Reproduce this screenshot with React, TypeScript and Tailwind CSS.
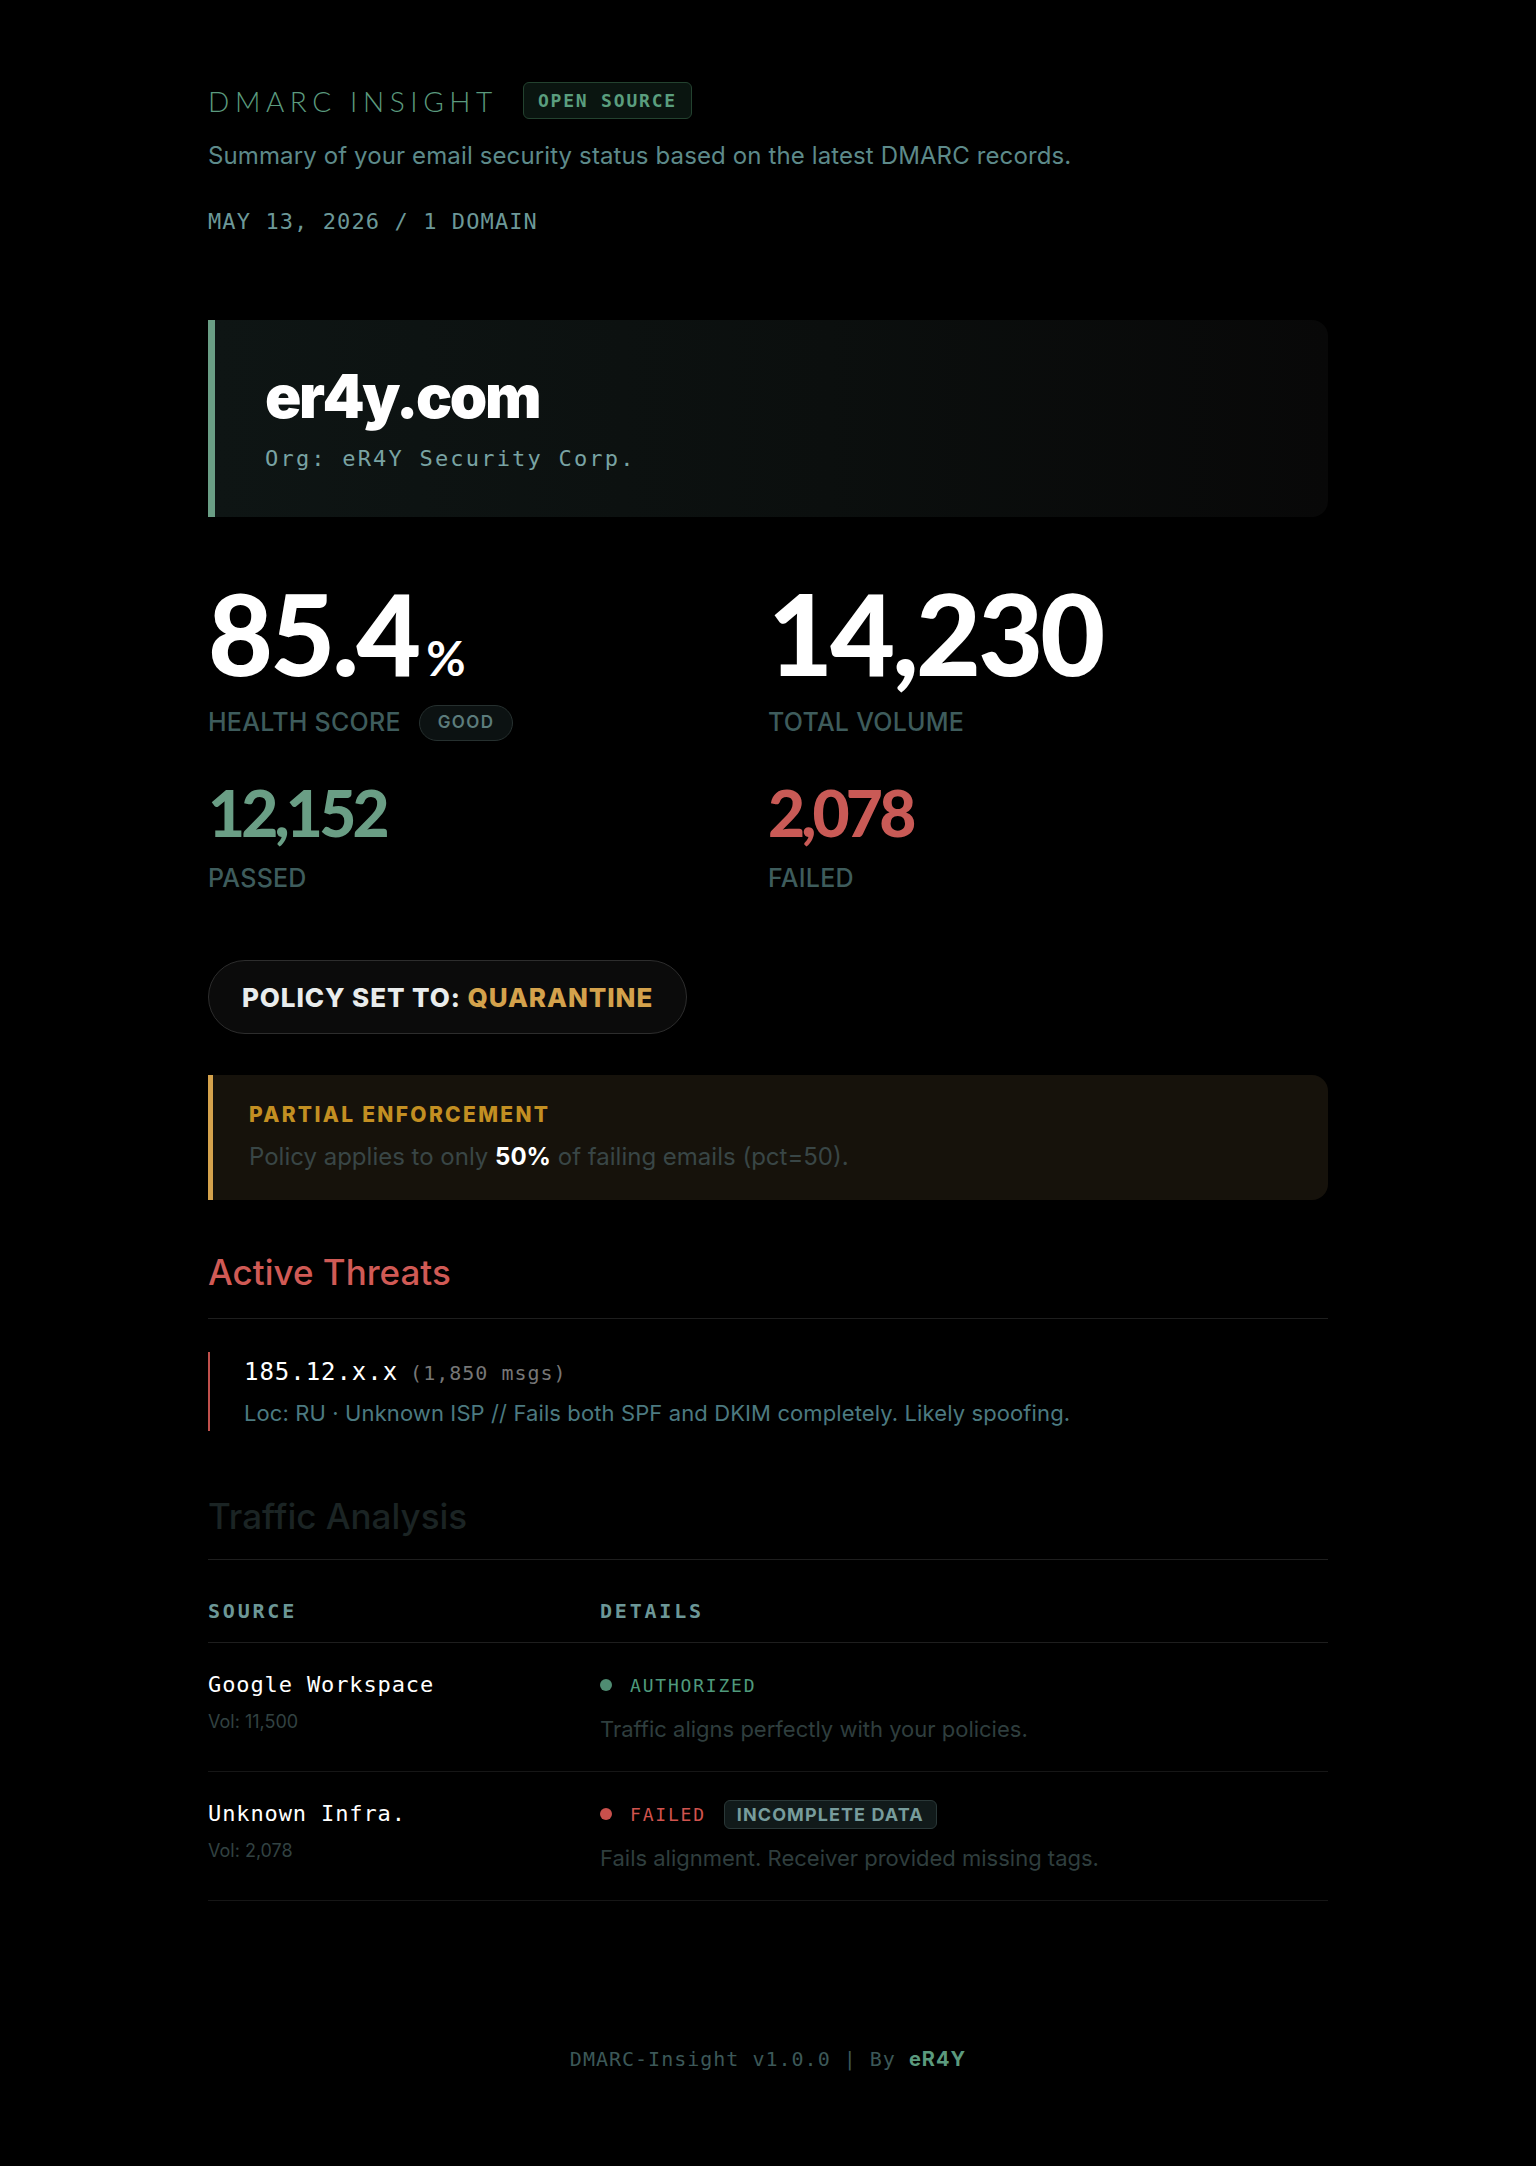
import type { ReactNode } from "react";

const mono = "font-['DejaVu_Sans_Mono',monospace]";
const lato = "font-['Lato',sans-serif]";

type Source = {
  name: string;
  volume: string;
  status: "ok" | "fail";
  statusLabel: string;
  tag?: string;
  detail: string;
};

const sources: Source[] = [
  {
    name: "Google Workspace",
    volume: "Vol: 11,500",
    status: "ok",
    statusLabel: "AUTHORIZED",
    detail: "Traffic aligns perfectly with your policies.",
  },
  {
    name: "Unknown Infra.",
    volume: "Vol: 2,078",
    status: "fail",
    statusLabel: "FAILED",
    tag: "INCOMPLETE DATA",
    detail: "Fails alignment. Receiver provided missing tags.",
  },
];

function Stat({
  value,
  label,
  big,
  color,
  children,
}: {
  value: ReactNode;
  label: string;
  big?: boolean;
  color: string;
  children?: ReactNode;
}) {
  return (
    <div>
      <div
        className={
          big
            ? `${lato} flex items-baseline text-[112px] leading-none font-black tracking-[-0.025em] ${color}`
            : `${lato} text-[64px] leading-none font-black tracking-[-0.06em] ${color}`
        }
      >
        {value}
      </div>
      <div className="mt-[15px] flex h-[38px] items-center gap-[18px]">
        <span className="text-[25px] font-medium tracking-[0.01em] text-[#3e5c5c]">{label}</span>
        {children}
      </div>
    </div>
  );
}

export default function App() {
  return (
    <div className="min-h-screen bg-black font-['Inter',sans-serif] text-white">
      <main className="mx-auto w-full max-w-[1120px] pt-[82px] pb-[92px]">
        {/* header */}
        <header>
          <div className="flex h-[37px] items-center gap-[25px]">
            <h1 className={`${lato} text-[28px] font-light tracking-[0.2em] text-[#5b9a7e]`}>DMARC INSIGHT</h1>
            <span
              className={`${mono} flex h-[37px] items-center rounded-md border border-[#23422f] bg-[#0a1510] px-[14px] text-[18px] font-bold tracking-[0.1em] text-[#5a9e7e]`}
            >
              OPEN SOURCE
            </span>
          </div>
          <p className="mt-[21px] text-[24px] leading-[32px] tracking-[0.005em] text-[#5d8a8a]">
            Summary of your email security status based on the latest DMARC records.
          </p>
          <p className={`${mono} mt-[36px] text-[22px] leading-[28px] tracking-[0.05em] text-[#6c9898]`}>
            MAY 13, 2026 / 1 DOMAIN
          </p>
        </header>

        {/* domain card */}
        <section className="mt-[84px] rounded-r-2xl border-l-[7px] border-[#6a9e85] bg-[linear-gradient(90deg,#0e1514_0%,#0b0f0e_55%,#080808_100%)] pt-[46px] pb-[44px] pl-[50px]">
          <h2 className="text-[60px] leading-none font-black tracking-[-0.04em] text-white">er4y.com</h2>
          <p className={`${mono} mt-[19px] text-[22px] leading-[28px] tracking-[0.1em] text-[#79a3a3]`}>
            Org: eR4Y Security Corp.
          </p>
        </section>

        {/* stats */}
        <section className="mt-[60px] grid grid-cols-2 gap-y-[39px]">
          <Stat
            big
            color="text-white"
            label="HEALTH SCORE"
            value={
              <>
                85.4<span className="ml-[8px] text-[48px] font-bold tracking-normal">%</span>
              </>
            }
          >
            <span className="flex h-[36px] items-center rounded-full border border-[#26302f] bg-[#0c1212] px-[18px] text-[17px] font-semibold tracking-[0.08em] text-[#5c7c7c]">
              GOOD
            </span>
          </Stat>
          <Stat big color="text-white" label="TOTAL VOLUME" value="14,230" />
          <Stat color="text-[#6a9e85]" label="PASSED" value="12,152" />
          <Stat color="text-[#c95a56]" label="FAILED" value="2,078" />
        </section>

        {/* policy */}
        <div className="mt-[62px] inline-flex h-[74px] items-center rounded-full border border-[#2d2d2d] bg-[#0b0b0b] px-[33px] text-[26px] font-extrabold tracking-[0.035em]">
          <span className="text-[#e9ecec]">POLICY SET TO:&nbsp;</span>
          <span className="text-[#d4a24c]">QUARANTINE</span>
        </div>

        <section className="mt-[41px] rounded-r-2xl border-l-[5px] border-[#d4a24c] bg-[#16120b] pt-[26px] pb-[26px] pl-[36px]">
          <h3 className="text-[21px] leading-[28px] font-extrabold tracking-[0.11em] text-[#c38f22]">
            PARTIAL ENFORCEMENT
          </h3>
          <p className="mt-[11px] text-[24px] leading-[34px] text-[#394646]">
            Policy applies to only <b className="font-bold text-white">50%</b> of failing emails (pct=50).
          </p>
        </section>

        {/* threats */}
        <section className="mt-[52px]">
          <h2 className="border-b border-[#1e1e1e] pb-[26px] text-[35px] leading-[40px] font-medium text-[#d05a55]">
            Active Threats
          </h2>
          <div className="mt-[33px] border-l-2 border-[#c0504c] pt-[4px] pb-[3px] pl-[34px]">
            <div className="flex items-baseline gap-[12px] leading-[32px]">
              <span className={`${mono} text-[24px] tracking-[0.04em] text-white`}>185.12.x.x</span>
              <span className={`${mono} text-[20px] tracking-[0.05em] text-[#767676]`}>(1,850 msgs)</span>
            </div>
            <p className="mt-[9px] text-[22px] leading-[30px] tracking-[0.005em] text-[#4c7a80]">
              Loc: RU · Unknown ISP // Fails both SPF and DKIM completely. Likely spoofing.
            </p>
          </div>
        </section>

        {/* traffic */}
        <section className="mt-[65px]">
          <h2 className="border-b border-[#1e1e1e] pb-[23px] text-[35px] leading-[40px] font-medium text-[#1b2424]">
            Traffic Analysis
          </h2>
          <div className="mt-[20px]">
            <div
              className={`${mono} grid grid-cols-[392px_1fr] border-b border-[#1e1e1e] py-[19px] text-[20px] leading-[24px] font-bold tracking-[0.14em] text-[#6c9797]`}
            >
              <span>SOURCE</span>
              <span>DETAILS</span>
            </div>
            {sources.map((s) => (
              <div key={s.name} className="grid grid-cols-[392px_1fr] border-b border-[#161616] pt-[28px] pb-[27px]">
                <div>
                  <div className={`${mono} text-[22px] leading-[28px] tracking-[0.04em] text-white`}>{s.name}</div>
                  <div className="mt-[11px] text-[18px] leading-[24px] text-[#324242]">{s.volume}</div>
                </div>
                <div>
                  <div className="flex h-[28px] items-center">
                    <span
                      className={`h-[12px] w-[12px] rounded-full ${s.status === "ok" ? "bg-[#4f8c72]" : "bg-[#c9504c]"}`}
                    />
                    <span
                      className={`${mono} ml-[18px] text-[18px] tracking-[0.1em] ${s.status === "ok" ? "text-[#4f9a7c]" : "text-[#d0534e]"}`}
                    >
                      {s.statusLabel}
                    </span>
                    {s.tag && (
                      <span className="ml-[18px] flex h-[29px] items-center rounded-md border border-[#2a3838] bg-[#111a1a] px-[12px] text-[18px] font-bold tracking-[0.06em] text-[#779c9c]">
                        {s.tag}
                      </span>
                    )}
                  </div>
                  <p className="mt-[15px] text-[22px] leading-[30px] text-[#2f3e3e]">{s.detail}</p>
                </div>
              </div>
            ))}
          </div>
        </section>

        <footer className={`${mono} mt-[144px] text-center text-[20px] leading-[28px] tracking-[0.05em] text-[#3c5858]`}>
          DMARC-Insight v1.0.0 | By <span className="font-['Inter',sans-serif] font-bold text-[#5b9a7e]">eR4Y</span>
        </footer>
      </main>
    </div>
  );
}
